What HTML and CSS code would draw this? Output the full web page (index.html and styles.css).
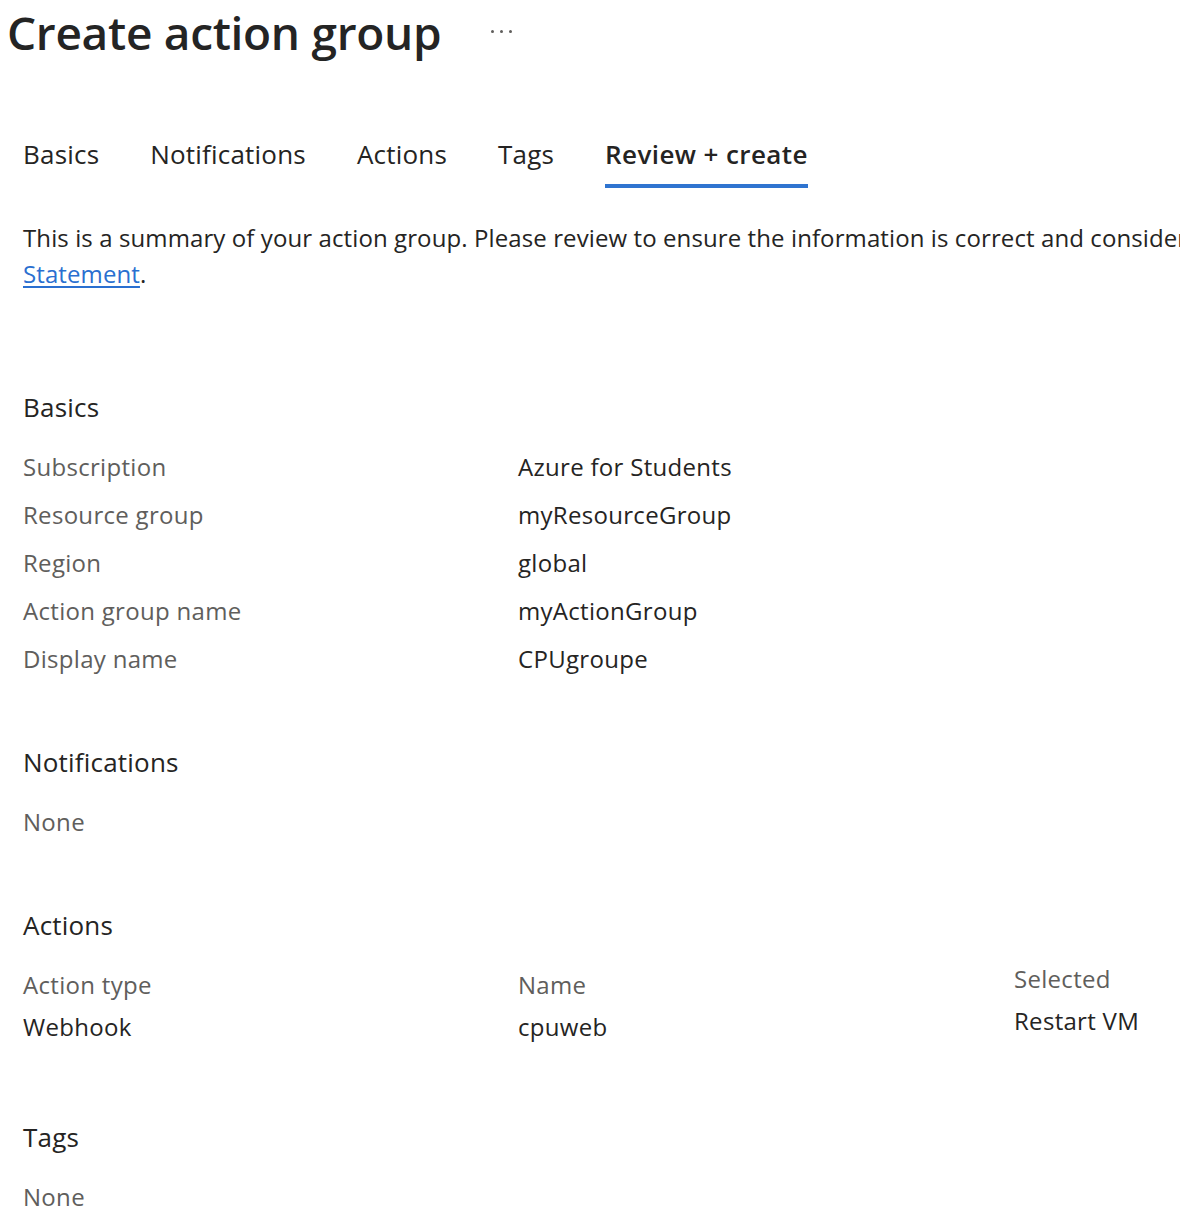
FILE: index.html
```html
<!DOCTYPE html>
<html>
<head>
<meta charset="utf-8">
<link rel="stylesheet" href="styles.css">
</head>
<body>
<div class="page">
  <header class="title-bar">
    <h1 class="title">Create action group</h1>
    <span class="more"><i></i><i></i><i></i></span>
  </header>
  <nav class="tabs">
    <span class="tab">Basics</span>
    <span class="tab">Notifications</span>
    <span class="tab">Actions</span>
    <span class="tab">Tags</span>
    <span class="tab active">Review + create</span>
  </nav>
  <p class="summary">This is a summary of your action group. Please review to ensure the information is correct and consider reviewing the Microsoft Privacy<br><a href="#">Statement</a>.</p>

  <section class="section basics">
    <h2 class="section-title">Basics</h2>
    <div class="kv">
      <div class="label">Subscription</div><div class="value">Azure for Students</div>
      <div class="label">Resource group</div><div class="value">myResourceGroup</div>
      <div class="label">Region</div><div class="value">global</div>
      <div class="label">Action group name</div><div class="value">myActionGroup</div>
      <div class="label">Display name</div><div class="value">CPUgroupe</div>
    </div>
  </section>

  <section class="section notifications">
    <h2 class="section-title">Notifications</h2>
    <div class="label none">None</div>
  </section>

  <section class="section actions">
    <h2 class="section-title">Actions</h2>
    <div class="action-grid">
      <div class="col">
        <div class="label">Action type</div>
        <div class="value">Webhook</div>
      </div>
      <div class="col">
        <div class="label">Name</div>
        <div class="value">cpuweb</div>
      </div>
      <div class="col col-up">
        <div class="label">Selected</div>
        <div class="value">Restart VM</div>
      </div>
    </div>
  </section>

  <section class="section tags">
    <h2 class="section-title">Tags</h2>
    <div class="label none">None</div>
  </section>
</div>
</body>
</html>
```

FILE: styles.css
```css
html, body {
  margin: 0;
  padding: 0;
  background: #ffffff;
  overflow: hidden;
}
body {
  font-family: "Open Sans", "Noto Sans", sans-serif;
  color: #323130;
  width: 1180px;
  height: 1216px;
}
.page {
  padding: 0 0 0 23px;
}
.title-bar {
  display: flex;
  align-items: center;
  margin-left: -16px;
  height: 64px;
}
.title {
  margin: 0;
  font-size: 46px;
  font-weight: 600;
  line-height: 64px;
  color: #242424;
  letter-spacing: -0.3px;
}
.more {
  display: flex;
  gap: 6px;
  margin-left: 50px;
  margin-top: -2px;
}
.more i {
  width: 3px;
  height: 3px;
  border-radius: 50%;
  background: #605e5c;
}
.tabs {
  display: flex;
  margin-top: 73px;
  gap: 51px;
}
.tab {
  font-size: 26px;
  letter-spacing: 0.2px;
  line-height: 34px;
  padding-bottom: 13px;
  border-bottom: 4px solid transparent;
  color: #252423;
}
.tab.active {
  font-weight: 600;
  letter-spacing: 0.4px;
  border-bottom-color: #2f74d0;
}
.summary {
  margin: 32px 0 0 0;
  font-size: 24px;
  letter-spacing: 0.1px;
  line-height: 36px;
  white-space: nowrap;
  color: #252423;
}
.summary a {
  color: #2a6fd0;
  text-decoration: underline;
  text-underline-offset: 3px;
}
.section-title {
  margin: 0;
  font-size: 26px;
  letter-spacing: 0.2px;
  font-weight: 400;
  line-height: 34px;
  color: #252423;
}
.basics {
  margin-top: 98px;
}
.kv {
  display: grid;
  grid-template-columns: 495px 1fr;
  row-gap: 12px;
  margin-top: 25px;
}
.label {
  font-size: 24px;
  letter-spacing: 0.3px;
  line-height: 36px;
  color: #605e5c;
}
.value {
  font-size: 24px;
  letter-spacing: 0.3px;
  line-height: 36px;
  color: #252423;
}
.notifications {
  margin-top: 68px;
}
.none {
  margin-top: 25px;
}
.actions {
  margin-top: 68px;
}
.action-grid {
  display: grid;
  grid-template-columns: 495px 496px 1fr;
  margin-top: 25px;
}
.action-grid .value {
  margin-top: 6px;
}
.col-up {
  margin-top: -6px;
}
.tags {
  margin-top: 75px;
}
```
